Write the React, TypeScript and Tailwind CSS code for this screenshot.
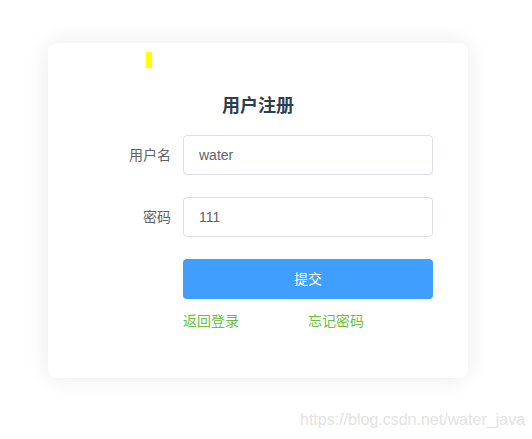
export default function App() {
  const font = { fontFamily: '"Liberation Sans", "Noto Sans CJK SC", sans-serif' };
  return (
    <div className="relative w-[532px] h-[439px] bg-white overflow-hidden" style={font}>
      <div className="pt-[43px] pl-[48px]">
        <div className="w-[420px] h-[335px] bg-white rounded-[8px] shadow-[0_0_22px_rgba(0,0,0,0.09)] pt-[9px] pb-[47px]">
          <div className="ml-[98px] w-[6px] h-[16px] bg-[#ffff00]"></div>
          <h2 className="mt-[26px] text-center text-[18px] leading-6 font-bold text-[#2c3e50]">用户注册</h2>
          <div className="mt-[17px] flex flex-col gap-[22px] px-[35px]">
            <div className="flex items-center">
              <label className="w-[100px] pr-3 text-right text-[14px] text-[#606266]">用户名</label>
              <div className="w-[250px] h-10 border border-[#dcdfe6] rounded-[4px] px-[15px] flex items-center text-[14px] text-[#606266]">water</div>
            </div>
            <div className="flex items-center">
              <label className="w-[100px] pr-3 text-right text-[14px] text-[#606266]">密码</label>
              <div className="w-[250px] h-10 border border-[#dcdfe6] rounded-[4px] px-[15px] flex items-center text-[14px] text-[#606266]">111</div>
            </div>
            <div className="flex">
              <div className="w-[100px]"></div>
              <button className="w-[250px] h-10 rounded-[4px] bg-[#409eff] text-white text-[14px]">提交</button>
            </div>
          </div>
          <div className="mt-[12px] pl-[135px] grid grid-cols-2 w-[385px] text-[14px] leading-5 text-[#67c23a]">
            <span>返回登录</span>
            <span>忘记密码</span>
          </div>
        </div>
      </div>
      <div className="absolute left-[300px] top-[410px] text-[16px] leading-5 text-[#e3e3e3] whitespace-nowrap">https://blog.csdn.net/water_java</div>
    </div>
  );
}
